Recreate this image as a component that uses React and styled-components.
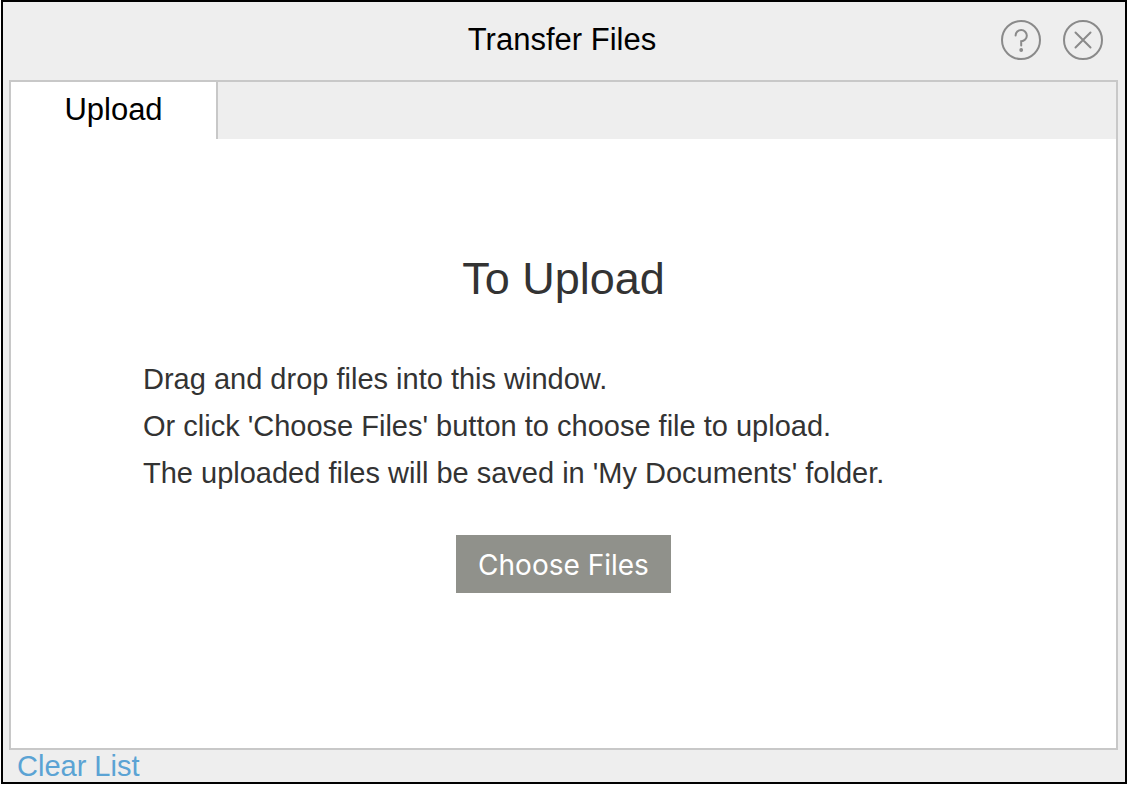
import React, { useRef, useState } from 'react';
import styled, { createGlobalStyle } from 'styled-components';

const colors = {
  chrome: '#eeeeee',
  line: '#c8c8c8',
  icon: '#8a8a8a',
  text: '#333333',
  button: '#90918b',
  link: '#5ba3d4',
};

const GlobalStyle = createGlobalStyle`
  *, *::before, *::after { box-sizing: border-box; }
  body {
    margin: 0;
    background: #fff;
    font-family: "Liberation Sans", Arial, Helvetica, sans-serif;
  }
  button {
    margin: 0;
    padding: 0;
    border: 0;
    background: none;
    font-family: inherit;
    cursor: pointer;
  }
`;

const Page = styled.div`
  display: flex;
  min-height: 100vh;
  padding: 0 1px 1px;
`;

const Dialog = styled.section`
  flex: 1;
  display: flex;
  flex-direction: column;
  border: 2px solid #000;
  background: ${colors.chrome};
`;

const Header = styled.header`
  display: grid;
  grid-template-columns: 1fr auto 1fr;
  align-items: center;
  height: 78px;
  padding: 0 22px 2px 18px;
`;

const Title = styled.h1`
  grid-column: 2;
  margin: 0;
  font-size: 31px;
  font-weight: 400;
  line-height: 36px;
  color: #000;
`;

const HeaderActions = styled.div`
  display: flex;
  justify-content: flex-end;
  gap: 22px;
`;

const IconButton = styled.button`
  width: 40px;
  height: 40px;

  svg {
    display: block;
    fill: none;
    stroke: ${colors.icon};
    stroke-width: 2;
    stroke-linecap: round;
  }
`;

const Panel = styled.div`
  flex: 1;
  display: flex;
  flex-direction: column;
  margin: 0 7px 0 6px;
  border: 2px solid ${colors.line};
  background: #fff;
`;

const TabBar = styled.div`
  display: flex;
  height: 57px;
  background: ${colors.chrome};
`;

const Tab = styled.button`
  width: 207px;
  padding-bottom: 2px;
  border-right: 2px solid ${colors.line};
  background: ${({ $active }) => ($active ? '#fff' : 'transparent')};
  font-size: 31px;
  line-height: 36px;
  color: #000;
`;

const DropZone = styled.div`
  flex: 1;
  display: flex;
  flex-direction: column;
  align-items: center;
  padding: 112px 132px 0;
  color: ${colors.text};
`;

const Heading = styled.h2`
  margin: 0 0 49px;
  font-size: 45px;
  font-weight: 400;
  line-height: 56px;
`;

const Steps = styled.div`
  align-self: stretch;
  margin-bottom: 38px;
  font-size: 29px;
  line-height: 47px;

  p { margin: 0; }
`;

const ChooseButton = styled.button`
  height: 58px;
  padding: 2px 22px 0;
  background: ${colors.button};
  font-family: Inter, sans-serif;
  font-size: 28px;
  color: #fff;
`;

const Footer = styled.footer`
  display: flex;
  height: 32px;
  padding: 0 14px;
`;

const ClearLink = styled.a`
  font-size: 29px;
  line-height: 32px;
  color: ${colors.link};
  text-decoration: none;
`;

function HelpIcon() {
  return (
    <svg width="40" height="40" viewBox="0 0 40 40" aria-hidden="true">
      <circle cx="20" cy="20" r="19" />
      <path d="M14.6 15.5A5.6 5.6 0 1 1 20.2 21.2V25.5" />
      <circle cx="20.2" cy="30" r="0.9" fill={colors.icon} />
    </svg>
  );
}

function CloseIcon() {
  return (
    <svg width="40" height="40" viewBox="0 0 40 40" aria-hidden="true">
      <circle cx="20" cy="20" r="19" />
      <path d="M12.5 12.5L27.5 27.5M27.5 12.5L12.5 27.5" />
    </svg>
  );
}

export default function App() {
  const inputRef = useRef(null);
  const [, setFiles] = useState([]);

  const handleDrop = (e) => {
    e.preventDefault();
    setFiles(Array.from(e.dataTransfer.files));
  };

  const handleClear = (e) => {
    e.preventDefault();
    setFiles([]);
  };

  return (
    <Page>
      <GlobalStyle />
      <Dialog role="dialog" aria-labelledby="dialog-title">
        <Header>
          <Title id="dialog-title">Transfer Files</Title>
          <HeaderActions>
            <IconButton type="button" aria-label="Help"><HelpIcon /></IconButton>
            <IconButton type="button" aria-label="Close"><CloseIcon /></IconButton>
          </HeaderActions>
        </Header>

        <Panel>
          <TabBar role="tablist">
            <Tab type="button" role="tab" id="tab-upload" aria-selected="true" aria-controls="upload" $active>
              Upload
            </Tab>
          </TabBar>
          <DropZone
            id="upload"
            role="tabpanel"
            aria-labelledby="tab-upload"
            onDragOver={(e) => e.preventDefault()}
            onDrop={handleDrop}
          >
            <Heading>To Upload</Heading>
            <Steps>
              <p>Drag and drop files into this window.</p>
              <p>Or click 'Choose Files' button to choose file to upload.</p>
              <p>The uploaded files will be saved in 'My Documents' folder.</p>
            </Steps>
            <ChooseButton type="button" onClick={() => inputRef.current.click()}>
              Choose Files
            </ChooseButton>
            <input
              ref={inputRef}
              type="file"
              multiple
              hidden
              aria-label="Files to upload"
              onChange={(e) => setFiles(Array.from(e.target.files))}
            />
          </DropZone>
        </Panel>

        <Footer>
          <ClearLink href="#" onClick={handleClear}>Clear List</ClearLink>
        </Footer>
      </Dialog>
    </Page>
  );
}
